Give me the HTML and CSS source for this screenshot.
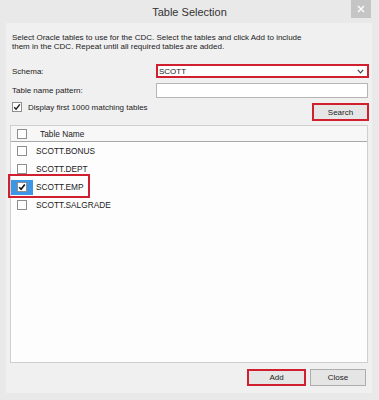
FILE: index.html
```html
<!DOCTYPE html>
<html>
<head>
<meta charset="utf-8">
<link rel="stylesheet" href="styles.css">
</head>
<body>
<div class="window">
  <div class="titlebar">
    <span></span>
    <div class="title">Table Selection</div>
    <div class="close">
      <svg width="8" height="8" viewBox="0 0 8 8"><path d="M1 1L7 7M7 1L1 7" stroke="#fff" stroke-width="1.4"/></svg>
    </div>
  </div>
  <div class="client">
    <p class="desc">Select Oracle tables to use for the CDC. Select the tables and click Add to include<br>them in the CDC. Repeat until all required tables are added.</p>
    <div class="form-row schema-row">
      <label class="lbl">Schema:</label>
      <div class="combo">
        <span>SCOTT</span>
        <svg width="7" height="5" viewBox="0 0 7 5"><path d="M0.8 0.8L3.5 3.8L6.2 0.8" stroke="#444" stroke-width="1.2" fill="none"/></svg>
      </div>
    </div>
    <div class="form-row pattern-row">
      <label class="lbl">Table name pattern:</label>
      <div class="input"></div>
    </div>
    <div class="opt-row">
      <div class="opt">
        <span class="cb checked">
          <svg width="8" height="8" viewBox="0 0 8 8"><path d="M1.2 4.2L3.1 6.2L6.8 1.4" stroke="#222" stroke-width="1.5" fill="none"/></svg>
        </span>
        <span>Display first 1000 matching tables</span>
      </div>
      <div class="btn btn-red search">Search</div>
    </div>
    <div class="grid">
      <div class="head">
        <div class="cc"><span class="cb"></span></div>
        <div class="hname">Table Name</div>
      </div>
      <div class="row">
        <div class="cc"><span class="cb"></span></div>
        <div class="name">SCOTT.BONUS</div>
      </div>
      <div class="row">
        <div class="cc"><span class="cb"></span></div>
        <div class="name">SCOTT.DEPT</div>
      </div>
      <div class="row sel">
        <div class="cc blue"><span class="cb checked">
          <svg width="8" height="8" viewBox="0 0 8 8"><path d="M1.2 4.2L3.1 6.2L6.8 1.4" stroke="#111" stroke-width="1.6" fill="none"/></svg>
        </span></div>
        <div class="name">SCOTT.EMP</div>
        <div class="hl"></div>
      </div>
      <div class="row">
        <div class="cc"><span class="cb"></span></div>
        <div class="name">SCOTT.SALGRADE</div>
      </div>
    </div>
    <div class="buttons">
      <div class="btn btn-red add">Add</div>
      <div class="btn closebtn">Close</div>
    </div>
  </div>
</div>
</body>
</html>
```

FILE: styles.css
```css
* { box-sizing: border-box; }
html, body { margin: 0; padding: 0; }
body {
  background: #e9e9e9;
  font-family: "Liberation Sans", Arial, sans-serif;
  color: #222;
}
.window {
  width: 379px;
  height: 400px;
  display: flex;
  flex-direction: column;
  background: #e9e9e9;
}
.titlebar {
  height: 23px;
  display: grid;
  grid-template-columns: 1fr auto 1fr;
  align-items: start;
}
.title {
  font-size: 11px;
  line-height: 24px;
  color: #333;
}
.close {
  justify-self: end;
  width: 20px;
  height: 18px;
  margin-right: 8px;
  background: #c5c5c5;
  display: flex;
  align-items: center;
  justify-content: center;
}
.client {
  flex: 1;
  margin: 0 7px 7px 6px;
  background: #f0f0f0;
  padding: 10px 3px 0 4px;
  display: flex;
  flex-direction: column;
  font-size: 8px;
  color: #222;
}
.desc {
  margin: 0 0 0 2px;
  line-height: 9px;
}
.form-row {
  display: grid;
  grid-template-columns: 144px 1fr;
  align-items: center;
  margin-left: 2px;
}
.schema-row { margin-top: 13px; }
.pattern-row { margin-top: 5px; margin-right: 1px; }
.combo {
  height: 14px;
  border: 2px solid #d01f2f;
  background: #fff;
  display: flex;
  align-items: center;
  justify-content: space-between;
  padding: 0 3px 0 1px;
}
.input {
  height: 15px;
  border: 1px solid #b5b5b5;
  background: #fff;
}
.opt-row {
  display: flex;
  justify-content: space-between;
  align-items: flex-start;
  margin-top: 4px;
  margin-left: 2px;
}
.opt {
  display: flex;
  align-items: center;
  gap: 6px;
}
.cb {
  width: 10px;
  height: 10px;
  border: 1px solid #8e8e8e;
  background: #fff;
  display: inline-flex;
  align-items: center;
  justify-content: center;
}
.btn {
  display: flex;
  align-items: center;
  justify-content: center;
  background: #e6e6e6;
  color: #222;
}
.btn-red { border: 2px solid #d01f2f; }
.search {
  width: 57px;
  height: 18px;
  margin-top: 1px;
}
.grid {
  margin-top: 4px;
  margin-right: 1px;
  height: 238px;
  border: 1px solid #cfcfcf;
  background: #fdfdfd;
  display: flex;
  flex-direction: column;
  font-size: 8.3px;
  color: #222;
}
.head {
  display: flex;
  align-items: center;
  height: 16px;
  border-bottom: 1px solid #a9a9a9;
  background: #f7f7f7;
}
.hname { padding-left: 7px; }
.row {
  position: relative;
  display: flex;
  align-items: center;
  height: 18px;
}
.cc {
  width: 22px;
  height: 100%;
  display: flex;
  align-items: center;
  justify-content: center;
}
.cc.blue {
  background: #3d95e6;
  height: 15px;
}
.name { padding-left: 3px; color: #222; }
.hl {
  position: absolute;
  left: -3px;
  top: -4px;
  width: 82px;
  height: 24px;
  border: 2px solid #d01f2f;
}
.buttons {
  display: flex;
  justify-content: flex-end;
  gap: 4px;
  margin-top: 6px;
  margin-right: 3px;
}
.add { width: 59px; height: 17px; }
.closebtn {
  width: 56px;
  height: 17px;
  border: 1px solid #adadad;
  background: #e5e5e5;
}
```
